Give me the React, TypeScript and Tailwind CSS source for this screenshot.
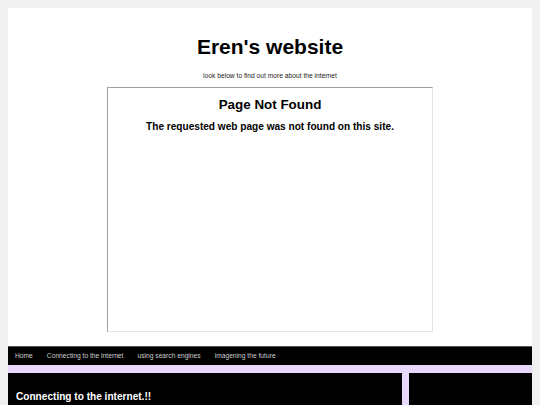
export default function App() {
  const links = ['Home', 'Connecting to the internet', 'using search engines', 'imagening the future'];

  return (
    <div className="min-h-screen bg-[#f0f0f0] px-2 pt-2 font-['Liberation_Sans',Arial,sans-serif]">
      <div className="bg-white">
        {/* header */}
        <div className="pt-[27px] text-center">
          <h1 className="text-[21px] leading-[24px] font-bold text-black">Eren's website</h1>
          <p className="mt-[13px] text-[6.7px] leading-[8px] text-[#222]">look below to find out more about the internet</p>
        </div>

        {/* embedded frame */}
        <div className="mx-auto mt-[7px] h-[245px] w-[326px] border border-t-[#a0a0a0] border-l-[#a0a0a0] border-r-[#e4e4e4] border-b-[#e4e4e4] text-center">
          <h2 className="mt-[9px] text-[13.4px] leading-[16px] font-bold text-black">Page Not Found</h2>
          <p className="mt-[8px] text-[10.1px] leading-[12px] font-bold text-black">The requested web page was not found on this site.</p>
        </div>

        <div className="h-[14px]" />

        {/* nav */}
        <nav className="flex h-[19px] items-center border-t border-[#555] bg-black px-0">
          {links.map((l) => (
            <a key={l} className="px-[7px] text-[6.7px] leading-[8px] text-[#cfcfcf]">
              {l}
            </a>
          ))}
        </nav>

        {/* content */}
        <div className="flex gap-[7px] bg-[#e8d8fc] pt-2">
          <div className="h-[60px] flex-1 bg-black px-2 pt-[18px]">
            <h3 className="text-[10.1px] leading-[12px] font-bold text-white">Connecting to the internet.!!</h3>
          </div>
          <div className="h-[60px] w-[123px] bg-black" />
        </div>
      </div>
    </div>
  );
}
